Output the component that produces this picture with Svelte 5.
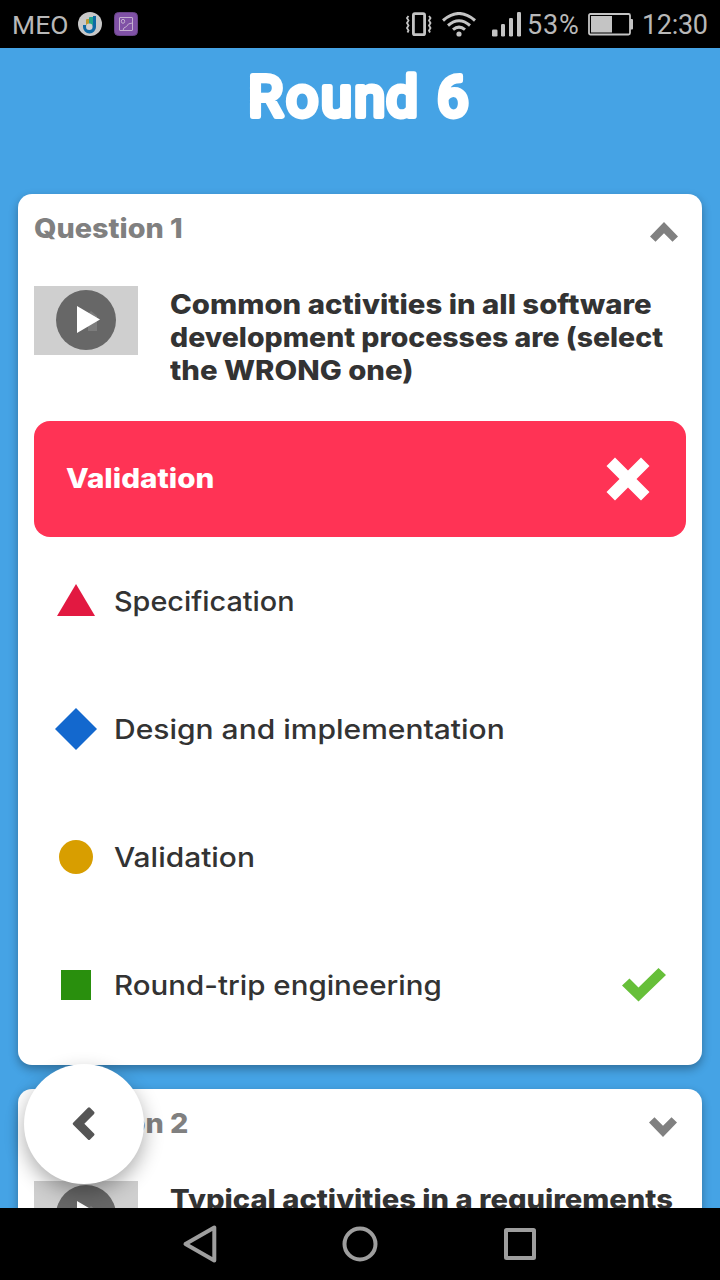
<script>
  const options = [
    { shape: 'triangle', label: 'Specification' },
    { shape: 'diamond', label: 'Design and implementation' },
    { shape: 'circle', label: 'Validation' },
    { shape: 'square', label: 'Round-trip engineering', correct: true }
  ];
</script>

{#snippet thumbnail()}
  <svg class="thumb" width="104" height="69" viewBox="0 0 104 69">
    <rect width="104" height="69" fill="#cfcfcf" />
    <circle cx="52" cy="34" r="30" fill="#676767" />
    <path d="M52 30l5-5 6 5v15h-9v-5h-11z" fill="#7c7c7c" />
    <path d="M43 20v27l23-13.5z" fill="#fff" />
  </svg>
{/snippet}

<div class="screen">
  <header class="status">
    <span class="carrier">MEO</span>
    <svg class="app-icon" width="24" height="24" viewBox="0 0 24 24">
      <circle cx="12" cy="12" r="12" fill="#c8c8c8" />
      <path d="M8 8q0-1 1-1h2v6H8z" fill="#bd9830" />
      <path d="M11 6q0-1 1-1h3v8h-4z" fill="#22a58d" />
      <path d="M15 4h3v11a6.5 6.5 0 0 1-13 0v-2h4l6 0z" fill="#0d69a5" />
      <circle cx="11.3" cy="14.7" r="3.3" fill="#d0d0d0" />
    </svg>
    <svg width="24" height="24" viewBox="0 0 24 24" fill="none" stroke="#c4afd0" stroke-width="1">
      <rect x=".5" y=".5" width="23" height="23" rx="4" fill="#8051a6" stroke="#694588" />
      <rect x="5.5" y="5.5" width="13" height="13" rx=".5" />
      <ellipse cx="9" cy="9.3" rx="1.7" ry="2" />
      <path d="M9 18.500q0-3 3.500-4 1-3.500 6-3.500" />
    </svg>
    <div class="indicators">
      <svg width="27" height="25" viewBox="0 0 27 25" fill="none" stroke="#c4c4c4">
        <rect x="8.400" y="1.700" width="11.200" height="21" rx="1.500" stroke-width="2.800" />
        <path d="M3.500 4l-1.500 2 1.500 2.500-1.500 2.500 1.500 2.500-1.500 2.500 1.500 2.500-1 2M24 4l1.500 2-1.500 2.500 1.500 2.500-1.500 2.500 1.500 2.500-1.500 2.500 1 2" stroke-width="1.800" />
      </svg>
      <svg class="wifi" width="34" height="25" viewBox="0 0 34 25" fill="none" stroke="#c4c4c4" stroke-width="3">
        <path d="M1 8.500q16-14 32 0M6 13.500q11-9.500 22 0M11 17.700q6-5.200 12 0" />
        <circle cx="17" cy="22" r="2.600" fill="#c4c4c4" stroke="none" />
      </svg>
      <svg class="signal" width="30" height="25" viewBox="0 0 30 25" fill="#c4c4c4">
        <rect x="0" y="17.500" width="5.500" height="7" rx="1.300" />
        <rect x="9" y="12" width="4" height="12.500" rx="1.300" />
        <rect x="17" y="6" width="4" height="18.500" rx="1.300" />
        <rect x="25" y="0" width="4" height="24.500" rx="1.300" />
      </svg>
      <span class="percent">53%</span>
      <svg class="battery" width="45" height="23" viewBox="0 0 45 23">
        <rect x="1" y="1" width="41" height="20.500" rx="1.500" fill="none" stroke="#c4c4c4" stroke-width="1.800" />
        <rect x="3" y="3" width="21" height="16.500" fill="#c4c4c4" />
        <rect x="42" y="6" width="3" height="10.500" rx="1" fill="#c4c4c4" />
      </svg>
      <span class="clock">12:30</span>
    </div>
  </header>

  <main>
    <h1>
      <svg width="240" height="100" viewBox="0 0 240 100">
        <text x="8.300 46.300 81 114.300 146.300 180 197" y="68">Round 6</text>
      </svg>
    </h1>

    <section class="card">
      <div class="card-head">
        <h2>Question 1</h2>
        <svg class="chevron up" width="28" height="20" viewBox="0 0 28 20"><path d="M14 0L28 14.500 22.500 19.700 14 11.300 5.500 19.700 0 14.500z" fill="#808080" /></svg>
      </div>
      <div class="prompt">
        {@render thumbnail()}
        <p>
          <span class="l1">Common activities in all software</span>
          <span class="l2">development processes are (select</span>
          <span class="l3">the WRONG one)</span>
        </p>
      </div>
      <div class="answer">
        <span>Validation</span>
        <svg width="44" height="44" viewBox="0 0 44 44"><path d="M9 .5L22 13.500 35 .5 43.500 9 30.500 22 43.500 35 35 43.500 22 30.500 9 43.500 .5 35 13.500 22 .5 9z" fill="#fff" /></svg>
      </div>
      <ul>
        {#each options as option}
          <li>
            <svg class="shape" width="44" height="44" viewBox="0 0 44 44">
              {#if option.shape === 'triangle'}
                <path d="M22 5L41 37H3z" fill="#e21941" />
              {:else if option.shape === 'diamond'}
                <path d="M22 1L43 22 22 43 1 22z" fill="#1368ce" />
              {:else if option.shape === 'circle'}
                <circle cx="22" cy="22" r="17" fill="#d89e00" />
              {:else}
                <rect x="7" y="7" width="30" height="30" fill="#298f0d" />
              {/if}
            </svg>
            <span class={['label', option.shape]}>{option.label}</span>
            {#if option.correct}
              <svg class="check" width="44" height="34" viewBox="0 0 44 34"><path d="M0 17.500L7.500 10.500 16.500 19.500 36.500 0 44 7 16.500 33.500z" fill="#66bf39" /></svg>
            {/if}
          </li>
        {/each}
      </ul>
    </section>

    <section class="card">
      <div class="card-head">
        <h2>Question 2</h2>
        <svg class="chevron" width="28" height="20" viewBox="0 0 28 20"><path d="M14 20L28 5.500 22.500 .3 14 8.700 5.500 .3 0 5.500z" fill="#808080" /></svg>
      </div>
      <div class="prompt">
        {@render thumbnail()}
        <p><span class="l4">Typical activities in a requirements</span></p>
      </div>
    </section>

    <button class="back" aria-label="Back">
      <svg width="24" height="36" viewBox="0 0 24 36"><path d="M2.200 17.700L17 2.900 21 6.900 10.300 17.700 21 28.500 17 32.500z" fill="#555" stroke="#555" stroke-width="3" stroke-linejoin="round" /></svg>
    </button>
  </main>

  <nav>
    <svg width="36" height="40" viewBox="0 0 36 40"><path d="M32.300 3.500v33L3.500 20z" /></svg>
    <svg width="36" height="40" viewBox="0 0 36 40"><circle cx="18" cy="20" r="15.500" /></svg>
    <svg width="36" height="40" viewBox="0 0 36 40"><rect x="4" y="6" width="28" height="28" rx=".5" /></svg>
  </nav>
</div>

<style>
  :global(body) { margin: 0; overflow: hidden; }
  .screen {
    width: 720px;
    height: 1280px;
    display: flex;
    flex-direction: column;
    background: #45a3e5;
    font-family: Inter, "Open Sans", sans-serif;
    color: #333;
    overflow: hidden;
  }
  svg { display: block; flex: none; }
  h1, h2, p, ul { margin: 0; padding: 0; }
  .status {
    height: 48px;
    flex: none;
    background: #000;
    color: #b8b8b8;
    font: 27px/44px Roboto, sans-serif;
    display: flex;
    align-items: center;
    box-sizing: border-box;
    padding: 0 12px;
  }
  .carrier, .percent, .clock { padding-top: 2px; }
  .carrier { width: 66px; font-size: 26.5px; }
  .app-icon { margin-right: 12px; }
  .indicators { margin-left: auto; display: flex; align-items: center; white-space: nowrap; }
  .wifi { margin-left: 10px; }
  .signal { margin-left: 16px; }
  .percent { width: 53px; margin-left: 5px; letter-spacing: .8px; }
  .battery { margin-left: 8px; }
  .clock { width: 66px; margin-left: 9px; letter-spacing: -.3px; }
  main { position: relative; height: 1160px; flex: none; overflow: hidden; }
  h1 { height: 146px; display: flex; justify-content: center; }
  h1 text {
    font: 400 56px Roboto, sans-serif;
    fill: #fff;
    stroke: #fff;
    stroke-width: 5.800px;
    stroke-linejoin: round;
    stroke-linecap: round;
  }
  .card {
    margin: 0 18px 24px;
    padding: 0 16px 16px;
    background: #fff;
    border-radius: 14px;
    box-shadow: 0 4px 10px rgba(0, 0, 0, .32);
  }
  .card-head { height: 92px; display: flex; justify-content: space-between; align-items: flex-start; }
  h2, .prompt span, .answer span, .label { transform-origin: left center; white-space: nowrap; }
  h2 { font-weight: 800; font-size: 27px; line-height: 34px; color: #808080; padding-top: 18px; transform: scaleX(1.066); }
  .chevron { margin: 28px 9px 0 0; }
  .chevron.up { margin: 28px 8px 0 0; }
  .prompt { display: flex; gap: 32px; height: 135px; }
  .prompt p { font-weight: 800; font-size: 27px; line-height: 33px; padding-top: 2px; }
  .prompt span { display: block; width: max-content; }
  .l1 { transform: scaleX(1.087); }
  .l2 { transform: scaleX(1.054); }
  .l3 { transform: scaleX(1.087); }
  .l4 { transform: scaleX(1.08); }
  .answer {
    height: 116px;
    box-sizing: border-box;
    padding: 0 36px 0 32px;
    border-radius: 16px;
    background: #ff3355;
    color: #fff;
    display: flex;
    align-items: center;
    justify-content: space-between;
    font-weight: 800;
    font-size: 27px;
  }
  .answer span { transform: scaleX(1.097); padding-bottom: 1px; }
  ul { list-style: none; }
  li { height: 128px; display: flex; align-items: center; padding: 0 20px; font-size: 27px; font-weight: 500; }
  .label { margin-left: 16px; }
  .label.triangle { transform: scaleX(1.067); }
  .label.diamond { transform: scaleX(1.111); }
  .label.circle { transform: scaleX(1.108); }
  .label.square { transform: scaleX(1.093); }
  .check { margin-left: auto; }
  .back {
    position: absolute;
    left: 24px;
    top: 1016px;
    width: 120px;
    height: 120px;
    padding: 0;
    border: 0;
    border-radius: 50%;
    background: #fff;
    box-shadow: 0 8px 20px rgba(0, 0, 0, .32);
    display: flex;
    align-items: center;
    justify-content: center;
  }
  nav {
    height: 72px;
    flex: none;
    background: #000;
    display: flex;
    justify-content: center;
    align-items: center;
    gap: 124px;
    fill: none;
    stroke: #9e9e9e;
    stroke-width: 4;
    stroke-linejoin: round;
  }
</style>
